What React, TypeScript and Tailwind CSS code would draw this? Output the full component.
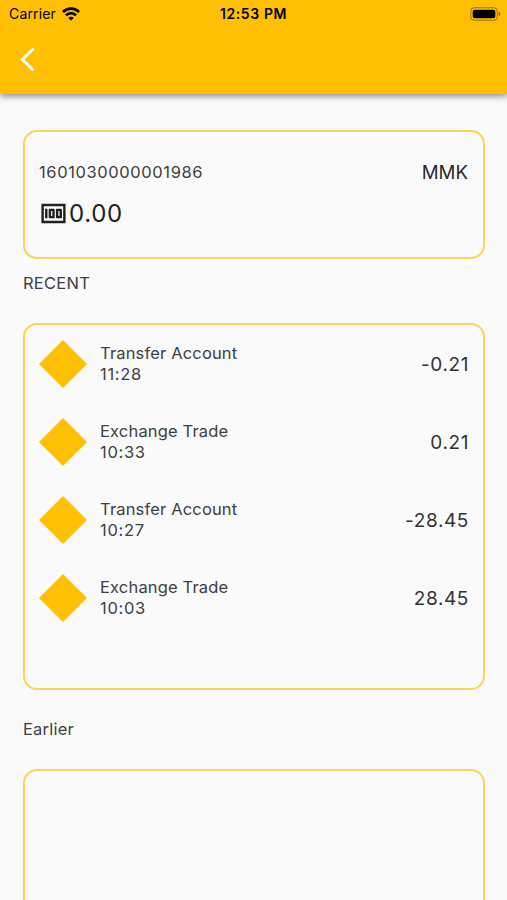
import { MdMoney } from "react-icons/md";

type Transaction = {
  title: string;
  time: string;
  amount: string;
};

const transactions: Transaction[] = [
  { title: "Transfer Account", time: "11:28", amount: "-0.21" },
  { title: "Exchange Trade", time: "10:33", amount: "0.21" },
  { title: "Transfer Account", time: "10:27", amount: "-28.45" },
  { title: "Exchange Trade", time: "10:03", amount: "28.45" },
];

function WifiIcon() {
  return (
    <svg viewBox="0 0 18 14" className="h-[14px] w-[18px]" fill="none" stroke="#000" strokeWidth="2.6">
      <path d="M1 5C5.4.5 12.6.5 17 5" />
      <path d="M4 8.3c2.8-2.8 7.2-2.8 10 0" />
      <path d="M9 13.6 6.2 10.9c1.6-1.5 4-1.5 5.6 0Z" fill="#000" stroke="none" />
    </svg>
  );
}

function BatteryIcon() {
  return (
    <svg viewBox="0 0 31 14" className="h-[14px] w-[31px]">
      <rect x="0.75" y="0.75" width="26.5" height="12.5" rx="3.6" fill="none" stroke="#000" strokeOpacity="0.4" />
      <rect x="2.7" y="2.7" width="22.6" height="8.6" rx="2" fill="#000" />
      <path d="M28.6 4.8v4.4c1.1-.4 1.8-1.2 1.8-2.2s-.7-1.8-1.8-2.2Z" fill="#000" fillOpacity="0.45" />
    </svg>
  );
}

function Header() {
  return (
    <header className="relative h-[94px] shrink-0 bg-[#ffc003] shadow-[0_3px_6px_rgba(0,0,0,0.38)]">
      <div className="grid h-[27px] grid-cols-3 items-center px-[6px] text-black">
        <div className="flex items-center gap-[6px] pl-[3px] text-[14px] tracking-[0.15px]">
          <span>Carrier</span>
          <WifiIcon />
        </div>
        <span className="text-center text-[14px] font-semibold tracking-[0.6px]">12:53 PM</span>
        <div className="flex justify-end">
          <BatteryIcon />
        </div>
      </div>
      <button aria-label="Back" className="ml-[20px] mt-[20px] block">
        <svg viewBox="0 0 16 25" className="h-[25px] w-[16px]" fill="none" stroke="#fff" strokeWidth="3">
          <path d="M13.5 1.5 2.5 12.5l11 11" />
        </svg>
      </button>
    </header>
  );
}

function AccountCard() {
  return (
    <section className="h-[129px] rounded-[14px] border-2 border-[#fdd35c] pl-[14px] pr-[15px] pt-[28px]">
      <div className="flex h-[24px] items-center justify-between">
        <span className="text-[16.5px] tracking-[0.6px] text-[#404040]">1601030000001986</span>
        <span className="pt-[3px] text-[18.7px] text-[#2b2b2b]">MMK</span>
      </div>
      <div className="mt-[12px] flex h-[36px] items-center text-[#212121]">
        <MdMoney className="mb-[2px] size-[29px]" />
        <span className="ml-px text-[24px] tracking-[0.7px]">0.00</span>
      </div>
    </section>
  );
}

function TransactionRow({ title, time, amount }: Transaction) {
  return (
    <li className="flex h-[78.15px] items-start">
      <svg viewBox="0 0 48 48" className="size-[48px]">
        <path d="M24 0 48 24 24 48 0 24Z" fill="#ffc003" />
      </svg>
      <div className="ml-[13px] mt-[3px] flex-1 text-[16.5px] leading-[20.7px] text-[#404040]">
        <p className="tracking-[0.16px]">{title}</p>
        <p className="tracking-[0.7px]">{time}</p>
      </div>
      <span className="pt-px text-[19px] leading-[48px] tracking-[0.6px] text-[#333]">{amount}</span>
    </li>
  );
}

export default function App() {
  return (
    <div className="flex h-[900px] w-full flex-col overflow-hidden bg-[#fafafa] font-['Inter',sans-serif]">
      <Header />
      <main className="flex flex-col pl-[23px] pr-[22px] pt-[36px]">
        <AccountCard />
        <h2 className="mt-[12px] text-[16.5px] leading-[24px] tracking-[0.25px] text-[#404040]">RECENT</h2>
        <ul className="mt-[28px] h-[367px] shrink-0 rounded-[14px] border-2 border-[#fdd35c] px-[14px] pt-[15px]">
          {transactions.map((item) => (
            <TransactionRow key={item.time} {...item} />
          ))}
        </ul>
        <h2 className="mt-[27px] text-[16.5px] leading-[24px] tracking-[0.2px] text-[#404040]">Earlier</h2>
        <section className="mt-[28px] h-[367px] shrink-0 rounded-[14px] border-2 border-[#fdd35c]" />
      </main>
    </div>
  );
}
